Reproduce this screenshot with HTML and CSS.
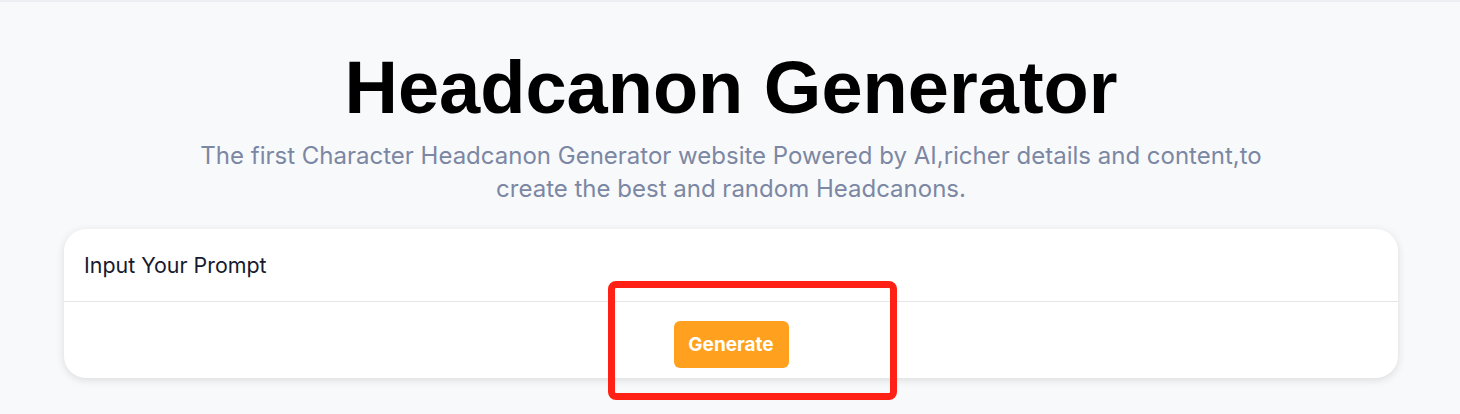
FILE: index.html
```html
<!DOCTYPE html>
<html lang="en">
<head>
  <meta charset="UTF-8">
  <meta name="viewport" content="width=device-width, initial-scale=1.0">
  <title>Headcanon Generator</title>
  <link rel="stylesheet" href="styles.css">
</head>
<body>
  <div class="pagina">
    <h1>Headcanon Generator</h1>
    <p class="subtitulo">The first Character Headcanon Generator website Powered by AI,richer details and content,to create the best and random Headcanons.</p>

    <div class="tarjeta">
      <div class="cabecera">Input Your Prompt</div>
      <div class="cuerpo">
        <button class="boton">Generate</button>
        <div class="marca"></div>
      </div>
    </div>
  </div>
</body>
</html>
```

FILE: styles.css
```css
body {
  margin: 0;
  min-height: 100vh;
  background: #f8f9fb;
  border-top: 2px solid #eceef1;
  font-family: Inter, 'Noto Sans', sans-serif;
}
.pagina {
  display: flex;
  flex-direction: column;
  align-items: center;
  padding: 0 62px 40px 64px;
}
h1 {
  font-family: 'Liberation Sans', Arial, sans-serif;
  font-weight: bold;
  font-size: 74px;
  line-height: 1;
  margin: 49px 0 0;
  color: #000;
}
.subtitulo {
  max-width: 1090px;
  text-align: center;
  font-size: 24px;
  line-height: 33px;
  color: #7b87a3;
  margin: 14px 0 0;
}
.tarjeta {
  margin-top: 24px;
  width: 100%;
  background: white;
  border-radius: 22px;
  box-shadow: 0 2px 8px rgba(0,0,0,0.12);
}
.cabecera {
  height: 72px;
  padding: 0 20px;
  display: flex;
  align-items: center;
  font-size: 21.4px;
  color: #161a2e;
  border-bottom: 1px solid #e6e6e9;
}
.cuerpo {
  position: relative;
  display: flex;
  justify-content: center;
  padding: 19px 0 10px;
}
.boton {
  background: #ffa11e;
  color: white;
  border: none;
  border-radius: 6px;
  font-family: Inter, sans-serif;
  font-weight: bold;
  font-size: 19px;
  width: 115px;
  height: 47px;
}
.marca {
  position: absolute;
  left: 544px;
  top: -21px;
  width: 275px;
  height: 105px;
  border: 7px solid #ff2116;
  border-radius: 8px;
}
```
